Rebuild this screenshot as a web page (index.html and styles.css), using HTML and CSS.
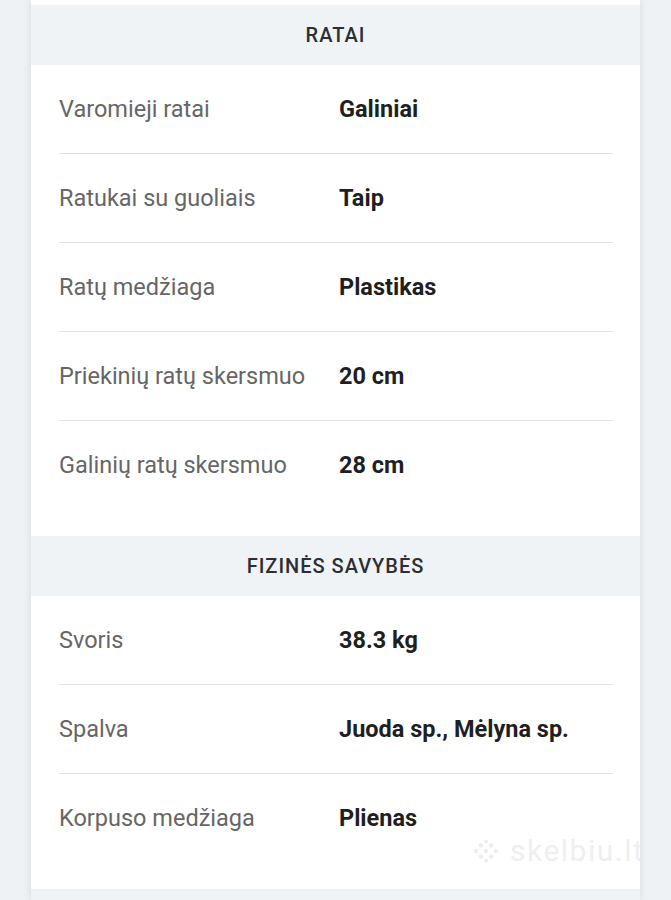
FILE: index.html
```html
<!DOCTYPE html>
<html>
<head>
    <meta charset="utf-8" />
    <title>Savybės</title>
    <link rel="stylesheet" href="styles.css">
</head>
<body>
    <div class="card">
        <!-- ratai -->
        <div class="section">
            <div class="section-title">RATAI</div>
            <div class="row"><span class="label">Varomieji ratai</span><span class="value">Galiniai</span></div>
            <div class="row"><span class="label">Ratukai su guoliais</span><span class="value">Taip</span></div>
            <div class="row"><span class="label">Ratų medžiaga</span><span class="value">Plastikas</span></div>
            <div class="row"><span class="label">Priekinių ratų skersmuo</span><span class="value">20 cm</span></div>
            <div class="row"><span class="label">Galinių ratų skersmuo</span><span class="value">28 cm</span></div>
        </div>
        <!-- fizinės savybės -->
        <div class="section">
            <div class="section-title">FIZINĖS SAVYBĖS</div>
            <div class="row"><span class="label">Svoris</span><span class="value">38.3 kg</span></div>
            <div class="row"><span class="label">Spalva</span><span class="value">Juoda sp., Mėlyna sp.</span></div>
            <div class="row"><span class="label">Korpuso medžiaga</span><span class="value">Plienas</span></div>
        </div>
        <div class="section-title"></div>
        <!-- vandens ženklas -->
        <div class="watermark">
            <svg width="26" height="24" viewBox="0 0 26 24">
                <g fill="#ededed">
                    <circle cx="3" cy="12" r="2.2"/><circle cx="8" cy="6.5" r="2.2"/><circle cx="8" cy="17.5" r="2.2"/>
                    <circle cx="13" cy="2.5" r="2"/><circle cx="13" cy="12" r="2.2"/><circle cx="13" cy="21.5" r="2"/>
                    <circle cx="18" cy="6.5" r="2.2"/><circle cx="18" cy="17.5" r="2.2"/><circle cx="23" cy="12" r="2.2"/>
                </g>
            </svg>
            <span>skelbiu.lt</span>
        </div>
    </div>
</body>
</html>
```

FILE: styles.css
```css
/*清除边距*/
body{
    margin: 0;
    background-color: #eef2f5;
    font-family: Roboto, "Noto Sans", sans-serif;
}
.card{
    position: relative;
    margin: 0 31px;
    padding-top: 5px;
    background-color: #fff;
    box-shadow: 0 0 8px rgba(0, 0, 0, 0.10);
    height: 895px;
    overflow: hidden;
}
.section{
    padding-bottom: 27px;
}
/*分组标题*/
.section-title{
    height: 60px;
    line-height: 60px;
    background-color: #eff3f6;
    text-align: center;
    font-size: 20px;
    font-weight: 500;
    letter-spacing: 1px;
    color: #2b2f33;
}
.row{
    display: flex;
    align-items: center;
    height: 88px;
    margin: 0 27px 0 28px;
    border-bottom: 1px solid #e2e2e2;
    font-size: 23.5px;
}
.row:last-child{
    border-bottom: none;
}
.label{
    width: 280px;
    flex-shrink: 0;
    color: #666;
}
.value{
    color: #1f1f1f;
    font-weight: 700;
}
/*水印*/
.watermark{
    position: absolute;
    left: 442px;
    top: 833px;
    display: flex;
    align-items: center;
    gap: 11px;
    font-size: 30px;
    letter-spacing: 1.5px;
    white-space: nowrap;
    color: #efefef;
}
```
